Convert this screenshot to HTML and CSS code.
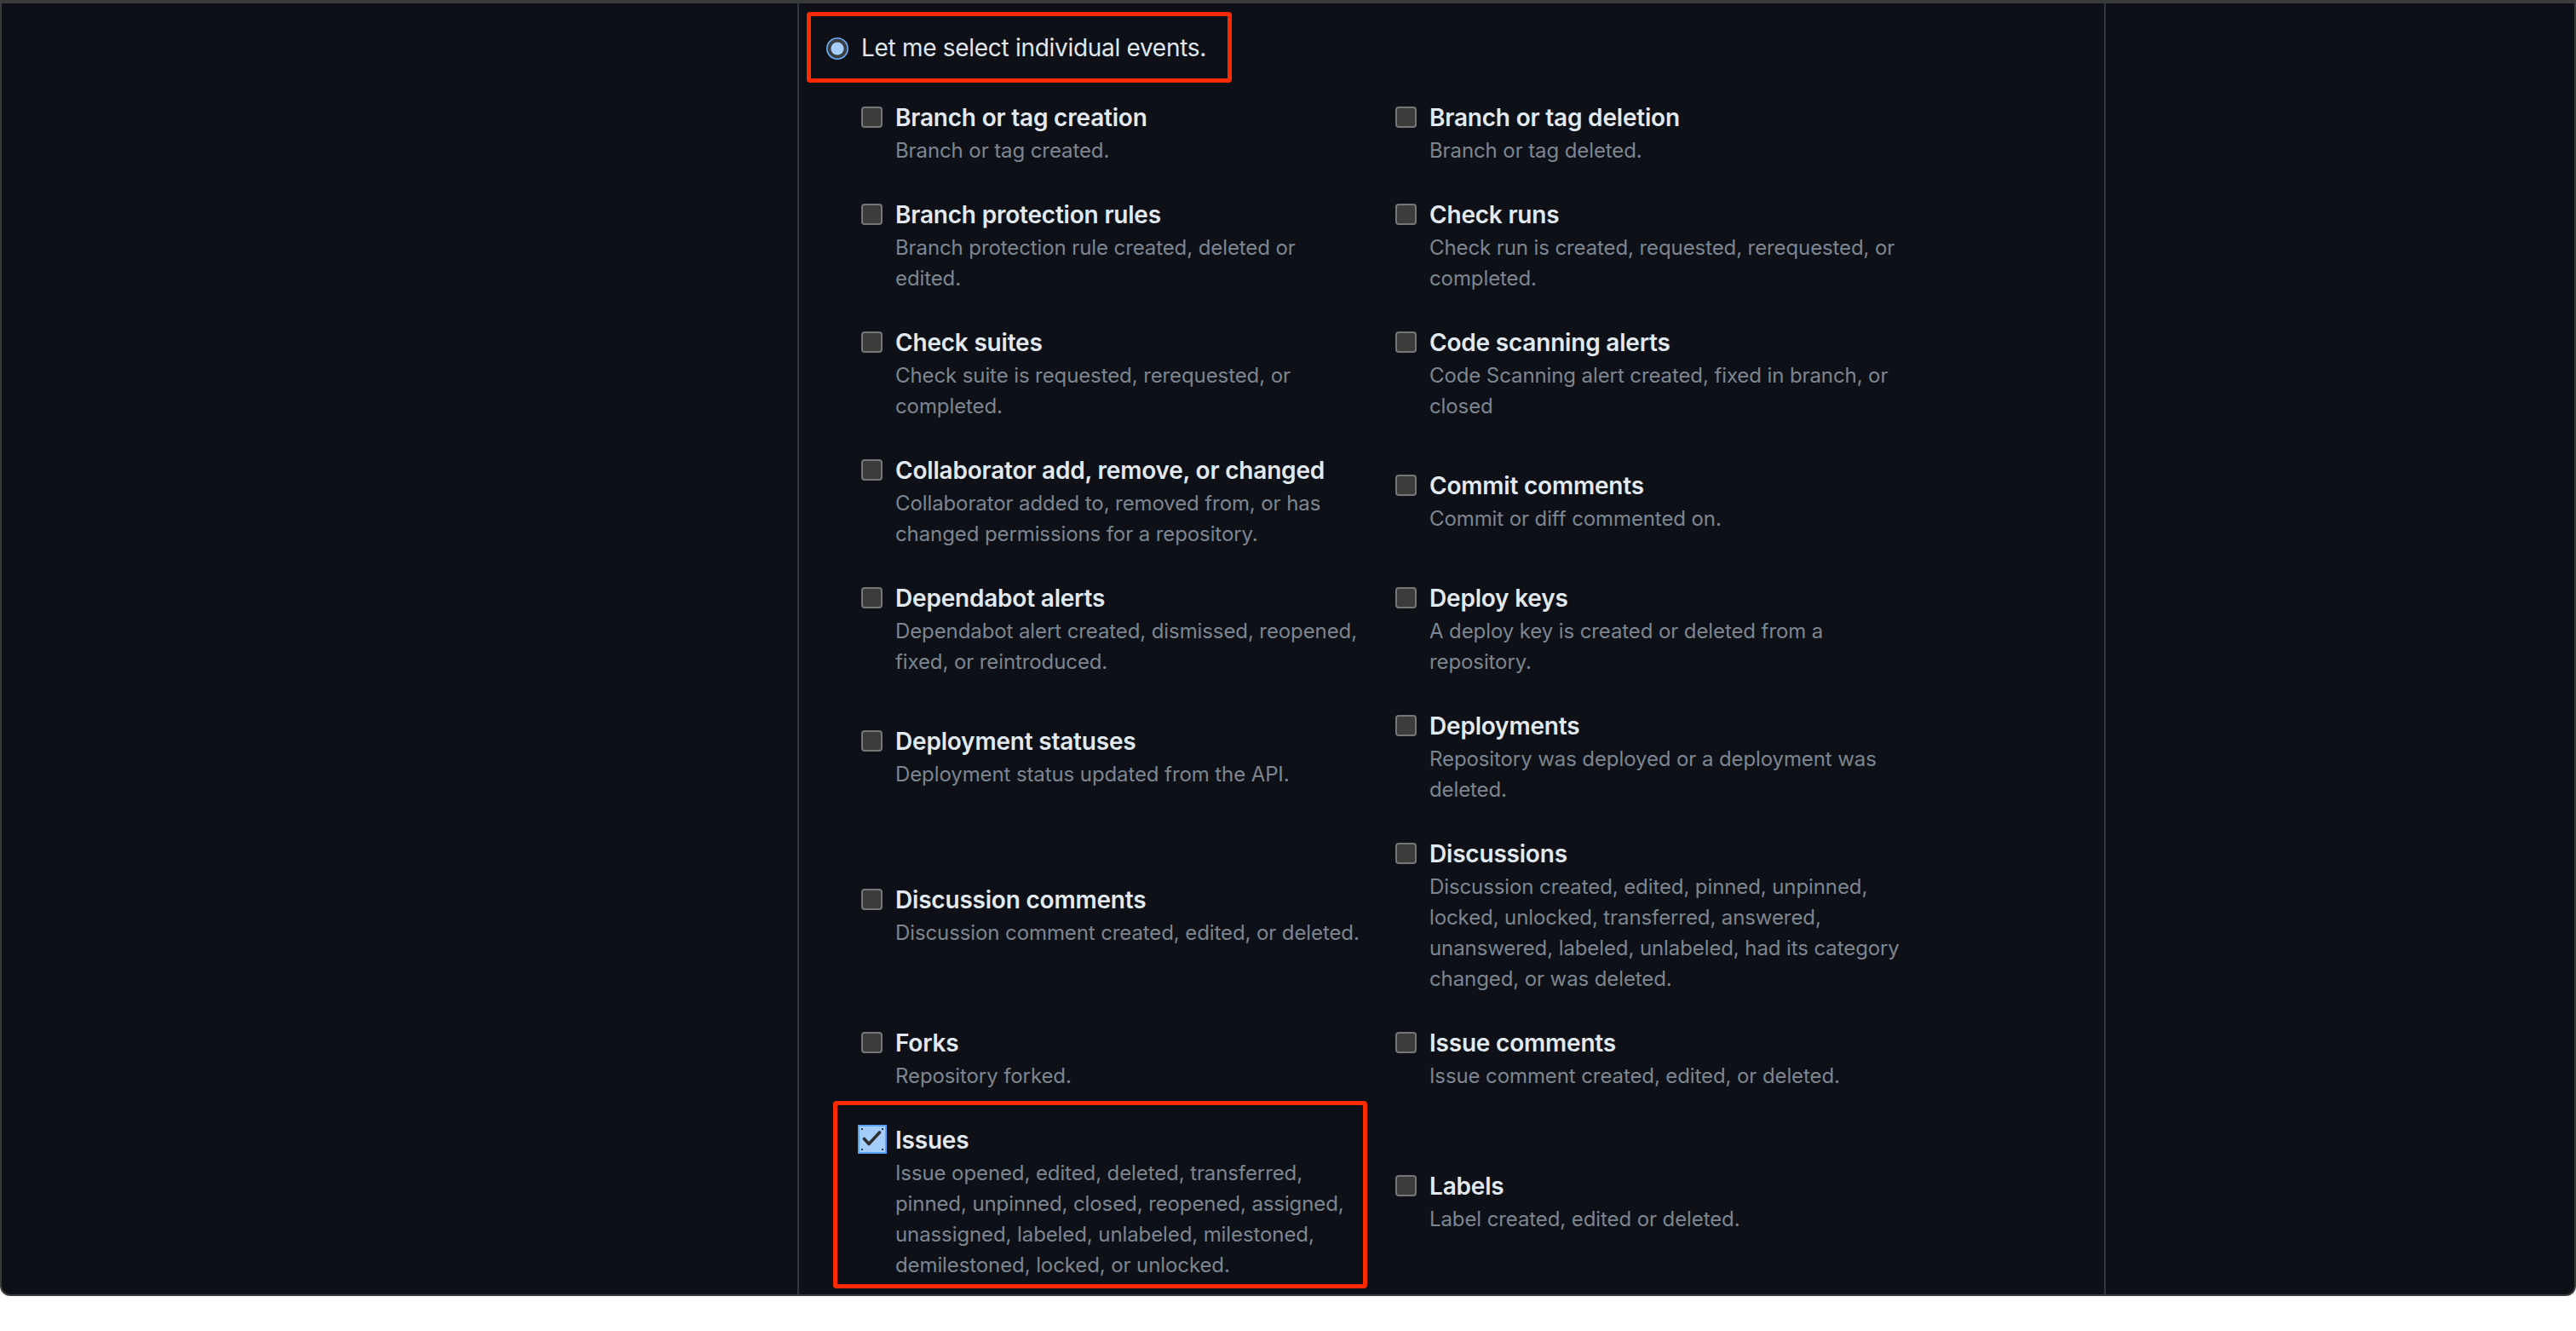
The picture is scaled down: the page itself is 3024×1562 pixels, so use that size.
FILE: index.html
```html
<!DOCTYPE html>
<html lang="en">
<head>
<meta charset="utf-8">
<title>Webhook events</title>
<link rel="stylesheet" href="styles.css">
</head>
<body>
<div class="window">
  <div class="main">
    <label class="radio-row">
      <span class="radio">
        <svg width="26" height="26" viewBox="0 0 26 26"><circle cx="13" cy="13" r="12.2" fill="#3a3d42" stroke="#6aaefc" stroke-width="1.6"/><circle cx="13" cy="13" r="7.6" fill="#a6cfff"/></svg>
      </span>
      <span class="radio-text">Let me select individual events.</span>
      <span class="annot annot-radio"></span>
    </label>

    <div class="events">
      <div class="event">
        <span class="cb-box"><span class="cb"></span></span>
        <div class="event-text"><div class="event-title">Branch or tag creation</div><div class="event-desc">Branch or tag created.</div></div>
      </div>
      <div class="event">
        <span class="cb-box"><span class="cb"></span></span>
        <div class="event-text"><div class="event-title">Branch or tag deletion</div><div class="event-desc">Branch or tag deleted.</div></div>
      </div>

      <div class="event">
        <span class="cb-box"><span class="cb"></span></span>
        <div class="event-text"><div class="event-title">Branch protection rules</div><div class="event-desc">Branch protection rule created, deleted or<br>edited.</div></div>
      </div>
      <div class="event">
        <span class="cb-box"><span class="cb"></span></span>
        <div class="event-text"><div class="event-title">Check runs</div><div class="event-desc">Check run is created, requested, rerequested, or completed.</div></div>
      </div>

      <div class="event">
        <span class="cb-box"><span class="cb"></span></span>
        <div class="event-text"><div class="event-title">Check suites</div><div class="event-desc">Check suite is requested, rerequested, or completed.</div></div>
      </div>
      <div class="event">
        <span class="cb-box"><span class="cb"></span></span>
        <div class="event-text"><div class="event-title">Code scanning alerts</div><div class="event-desc">Code Scanning alert created, fixed in branch, or closed</div></div>
      </div>

      <div class="event">
        <span class="cb-box"><span class="cb"></span></span>
        <div class="event-text"><div class="event-title">Collaborator add, remove, or changed</div><div class="event-desc">Collaborator added to, removed from, or has changed permissions for a repository.</div></div>
      </div>
      <div class="event">
        <span class="cb-box"><span class="cb"></span></span>
        <div class="event-text"><div class="event-title">Commit comments</div><div class="event-desc">Commit or diff commented on.</div></div>
      </div>

      <div class="event">
        <span class="cb-box"><span class="cb"></span></span>
        <div class="event-text"><div class="event-title">Dependabot alerts</div><div class="event-desc">Dependabot alert created, dismissed, reopened, fixed, or reintroduced.</div></div>
      </div>
      <div class="event">
        <span class="cb-box"><span class="cb"></span></span>
        <div class="event-text"><div class="event-title">Deploy keys</div><div class="event-desc">A deploy key is created or deleted from a repository.</div></div>
      </div>

      <div class="event">
        <span class="cb-box"><span class="cb"></span></span>
        <div class="event-text"><div class="event-title">Deployment statuses</div><div class="event-desc">Deployment status updated from the API.</div></div>
      </div>
      <div class="event">
        <span class="cb-box"><span class="cb"></span></span>
        <div class="event-text"><div class="event-title">Deployments</div><div class="event-desc">Repository was deployed or a deployment was deleted.</div></div>
      </div>

      <div class="event">
        <span class="cb-box"><span class="cb"></span></span>
        <div class="event-text"><div class="event-title">Discussion comments</div><div class="event-desc">Discussion comment created, edited, or deleted.</div></div>
      </div>
      <div class="event">
        <span class="cb-box"><span class="cb"></span></span>
        <div class="event-text"><div class="event-title">Discussions</div><div class="event-desc">Discussion created, edited, pinned, unpinned, locked, unlocked, transferred, answered, unanswered, labeled, unlabeled, had its category changed, or was deleted.</div></div>
      </div>

      <div class="event">
        <span class="cb-box"><span class="cb"></span></span>
        <div class="event-text"><div class="event-title">Forks</div><div class="event-desc">Repository forked.</div></div>
      </div>
      <div class="event">
        <span class="cb-box"><span class="cb"></span></span>
        <div class="event-text"><div class="event-title">Issue comments</div><div class="event-desc">Issue comment created, edited, or deleted.</div></div>
      </div>

      <div class="event event-marked">
        <span class="cb-box">
          <span class="cb cb-checked">
            <svg width="34" height="34" viewBox="0 0 34 34">
              <rect x="1" y="1" width="32" height="32" fill="#a4cdfb" stroke="#5aa2f5" stroke-width="2"/>
              <rect x="4" y="4" width="2" height="2" fill="#2c3440"/>
              <rect x="28" y="4" width="2" height="2" fill="#2c3440"/>
              <rect x="4" y="28" width="2" height="2" fill="#2c3440"/>
              <rect x="28" y="28" width="2" height="2" fill="#2c3440"/>
              <path d="M7.5 16.5 L13 22.5 L25.5 9" fill="none" stroke="#2e2e2e" stroke-width="3.6" stroke-linecap="round" stroke-linejoin="round"/>
            </svg>
          </span>
        </span>
        <div class="event-text"><div class="event-title">Issues</div><div class="event-desc">Issue opened, edited, deleted, transferred,<br>pinned, unpinned, closed, reopened, assigned, unassigned, labeled, unlabeled, milestoned, demilestoned, locked, or unlocked.</div></div>
        <span class="annot annot-issues"></span>
      </div>
      <div class="event">
        <span class="cb-box"><span class="cb"></span></span>
        <div class="event-text"><div class="event-title">Labels</div><div class="event-desc">Label created, edited or deleted.</div></div>
      </div>
    </div>
  </div>
</div>
</body>
</html>
```
FILE: styles.css
```css
html, body {
  margin: 0;
  padding: 0;
  background: #ffffff;
}

body {
  width: 3024px;
  height: 1562px;
  overflow: hidden;
  font-family: Inter, "Noto Sans", "Liberation Sans", sans-serif;
}

.window {
  box-sizing: border-box;
  width: 3024px;
  height: 1521px;
  background: #0d1117;
  border: 2px solid #3c3c3c;
  border-top: 4px solid #3a3a3a;
  border-radius: 0 0 12px 12px;
  overflow: hidden;
}

.main {
  box-sizing: border-box;
  margin-left: 934px;
  width: 1536px;
  height: 100%;
  border-left: 2px solid #30363d;
  border-right: 2px solid #30363d;
  padding: 31px 0 0 32px;
}

.radio-row {
  position: relative;
  display: flex;
  align-items: center;
  gap: 15px;
  width: fit-content;
  font-size: 28px;
  line-height: 42px;
  color: #e1e7ee;
  letter-spacing: -0.3px;
}

.radio {
  display: flex;
  width: 26px;
  height: 26px;
  margin-top: 1px;
}

.annot {
  position: absolute;
  box-sizing: border-box;
  border: 5.5px solid #ff2a00;
  border-radius: 4px;
  pointer-events: none;
}

.annot-radio {
  left: -23px;
  top: -21px;
  width: 499px;
  height: 83px;
}

.events {
  display: grid;
  grid-template-columns: 627px 627px;
  row-gap: 36px;
  align-items: center;
  margin: 40px 0 0 41px;
}

.event {
  position: relative;
  display: flex;
}

.cb-box {
  flex: none;
  width: 25px;
  height: 42px;
  margin-right: 15px;
}

.cb {
  display: block;
  box-sizing: border-box;
  width: 25px;
  height: 25px;
  margin-top: 7.5px;
  background: #3c3c3c;
  border: 2px solid #767676;
  border-radius: 4px;
}

.cb-checked {
  width: 34px;
  height: 34px;
  margin: 3.3px 0 0 -4.5px;
  background: none;
  border: none;
  border-radius: 0;
}

.cb-checked svg {
  display: block;
}

.event-text {
  width: 570px;
}

.event-title {
  font-size: 28px;
  line-height: 42px;
  font-weight: 600;
  color: #e3e9f0;
  letter-spacing: -0.2px;
}

.event-desc {
  font-size: 24px;
  line-height: 36px;
  color: #7d8590;
  letter-spacing: -0.1px;
}

.annot-issues {
  left: -33px;
  top: -25px;
  width: 627px;
  height: 220px;
}
```
